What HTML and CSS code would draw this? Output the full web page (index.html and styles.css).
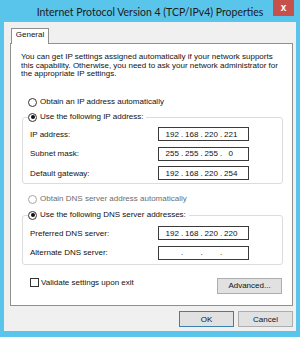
FILE: index.html
```html
<!DOCTYPE html>
<html>
<head>
    <title>Internet Protocol Version 4 (TCP/IPv4) Properties</title>
    <link rel="stylesheet" href="styles.css">
</head>
<body>
    <div class="window">
        <div class="titlebar">
            <span class="title">Internet Protocol Version 4 (TCP/IPv4) Properties</span>
            <button class="close">x</button>
        </div>

        <div class="client">
            <div class="tabs">
                <div class="tab">General</div>
            </div>

            <div class="panel">
                <p class="desc">You can get IP settings assigned automatically if your network supports this capability. Otherwise, you need to ask your network administrator for the appropriate IP settings.</p>

                <div class="option first">
                    <span class="radio"></span>
                    <span>Obtain an IP address automatically</span>
                </div>

                <fieldset class="group ip-group">
                    <legend class="option">
                        <span class="radio checked"></span>
                        <span>Use the following IP address:</span>
                    </legend>
                    <div class="field">
                        <label>IP address:</label>
                        <div class="ip"><span class="octet">192</span><span class="dot">.</span><span class="octet">168</span><span class="dot">.</span><span class="octet">220</span><span class="dot">.</span><span class="octet">221</span></div>
                    </div>
                    <div class="field">
                        <label>Subnet mask:</label>
                        <div class="ip"><span class="octet">255</span><span class="dot">.</span><span class="octet">255</span><span class="dot">.</span><span class="octet">255</span><span class="dot">.</span><span class="octet">0</span></div>
                    </div>
                    <div class="field">
                        <label>Default gateway:</label>
                        <div class="ip"><span class="octet">192</span><span class="dot">.</span><span class="octet">168</span><span class="dot">.</span><span class="octet">220</span><span class="dot">.</span><span class="octet">254</span></div>
                    </div>
                </fieldset>

                <div class="option dns-auto disabled">
                    <span class="radio"></span>
                    <span>Obtain DNS server address automatically</span>
                </div>

                <fieldset class="group dns-group">
                    <legend class="option">
                        <span class="radio checked"></span>
                        <span>Use the following DNS server addresses:</span>
                    </legend>
                    <div class="field">
                        <label>Preferred DNS server:</label>
                        <div class="ip"><span class="octet">192</span><span class="dot">.</span><span class="octet">168</span><span class="dot">.</span><span class="octet">220</span><span class="dot">.</span><span class="octet">220</span></div>
                    </div>
                    <div class="field">
                        <label>Alternate DNS server:</label>
                        <div class="ip"><span class="octet"></span><span class="dot">.</span><span class="octet"></span><span class="dot">.</span><span class="octet"></span><span class="dot">.</span><span class="octet"></span></div>
                    </div>
                </fieldset>

                <div class="panel-footer">
                    <div class="check-row">
                        <span class="checkbox"></span>
                        <span>Validate settings upon exit</span>
                    </div>
                    <button class="btn advanced">Advanced...</button>
                </div>
            </div>

            <div class="actions">
                <button class="btn default">OK</button>
                <button class="btn">Cancel</button>
            </div>
        </div>
    </div>
</body>
</html>
```

FILE: styles.css
```css
body {
    margin: 0;
    background: #5ac5ea;
    font-family: "Liberation Sans", Arial, sans-serif;
    font-size: 8px;
    color: #111;
}

.window {
    width: 300px;
    height: 337px;
    box-sizing: border-box;
    padding: 0 4px 6px;
    display: flex;
    flex-direction: column;
    background: #5ac5ea;
}

.titlebar {
    height: 22px;
    display: grid;
    grid-template-columns: 1fr auto 1fr;
    align-items: start;
}

.title {
    grid-column: 2;
    font-family: Lato, sans-serif;
    font-size: 10.5px;
    line-height: 22px;
    padding-top: 1px;
    color: #1b1b1b;
    white-space: nowrap;
}

.close {
    grid-column: 3;
    justify-self: end;
    margin-right: 2px;
    width: 21px;
    height: 16px;
    padding: 0;
    border: 0;
    background: #c8504a;
    color: #fff;
    font-family: "Liberation Sans", Arial, sans-serif;
    font-weight: bold;
    font-size: 10px;
    line-height: 14px;
}

.client {
    flex: 1;
    background: #f0f0f0;
    padding: 6px 3px 0 6px;
    display: flex;
    flex-direction: column;
}

.tabs {
    display: flex;
    margin-bottom: -1px;
}

.tab {
    position: relative;
    z-index: 1;
    margin-left: 1px;
    width: 38px;
    height: 16px;
    box-sizing: border-box;
    border: 1px solid #8f8f8f;
    border-bottom: none;
    background: #fff;
    text-align: center;
    line-height: 12px;
}

.panel {
    height: 263px;
    box-sizing: border-box;
    border: 1px solid #8f8f8f;
    background: #fff;
    padding: 9px 9px 0 10px;
}

.desc {
    margin: 0;
    line-height: 8.5px;
}

.option {
    display: flex;
    align-items: center;
    gap: 3px;
    height: 10px;
    line-height: 10px;
    white-space: nowrap;
}

.option.first {
    margin: 18.5px 0 0 7px;
}

.option.dns-auto {
    margin: 10px 0 0 7px;
}

.disabled {
    color: #6d6d6d;
}

.radio {
    width: 9px;
    height: 9px;
    box-sizing: border-box;
    border: 1px solid #333;
    border-radius: 50%;
    background: #fff;
    display: flex;
    align-items: center;
    justify-content: center;
}

.disabled .radio {
    border-color: #a6a6a6;
}

.radio.checked::after {
    content: "";
    width: 4px;
    height: 4px;
    border-radius: 50%;
    background: #111;
}

.group {
    margin: 5px 0 0 1px;
    width: 261px;
    box-sizing: border-box;
    min-inline-size: 0;
    border: 1px solid #dcdcdc;
    border-radius: 3px;
    padding: 5px 7px 3px;
    display: flex;
    flex-direction: column;
    gap: 5.5px;
}

.dns-group {
    margin-top: 6px;
    padding-top: 6px;
    padding-bottom: 4px;
}

.group legend {
    margin-left: -2px;
    padding: 0 3px 0 0;
}

.field {
    display: grid;
    grid-template-columns: 128px 91px;
    align-items: center;
    height: 14px;
}

.ip {
    height: 14px;
    box-sizing: border-box;
    border: 1px solid #3a3a3a;
    background: #fff;
    display: flex;
    align-items: center;
    padding-left: 5px;
}

.octet {
    width: 16.5px;
    text-align: center;
}

.dot {
    width: 3px;
    text-align: center;
}

.panel-footer {
    margin-top: 13px;
    display: flex;
    justify-content: space-between;
    align-items: flex-start;
}

.check-row {
    display: flex;
    align-items: center;
    gap: 2px;
    margin-left: 9px;
    height: 9px;
    line-height: 9px;
}

.checkbox {
    width: 9px;
    height: 9px;
    box-sizing: border-box;
    border: 1px solid #333;
    background: #fff;
}

.btn {
    height: 16px;
    padding: 0;
    box-sizing: border-box;
    border: 1px solid #adadad;
    background: #e1e1e1;
    color: #111;
    font-family: "Liberation Sans", Arial, sans-serif;
    font-size: 8px;
}

.advanced {
    width: 65px;
    margin-right: 1px;
}

.actions {
    margin-top: 5px;
    display: flex;
    justify-content: flex-end;
    gap: 4px;
}

.actions .btn {
    width: 55px;
}

.btn.default {
    border-color: #3c7fb1;
}
```
